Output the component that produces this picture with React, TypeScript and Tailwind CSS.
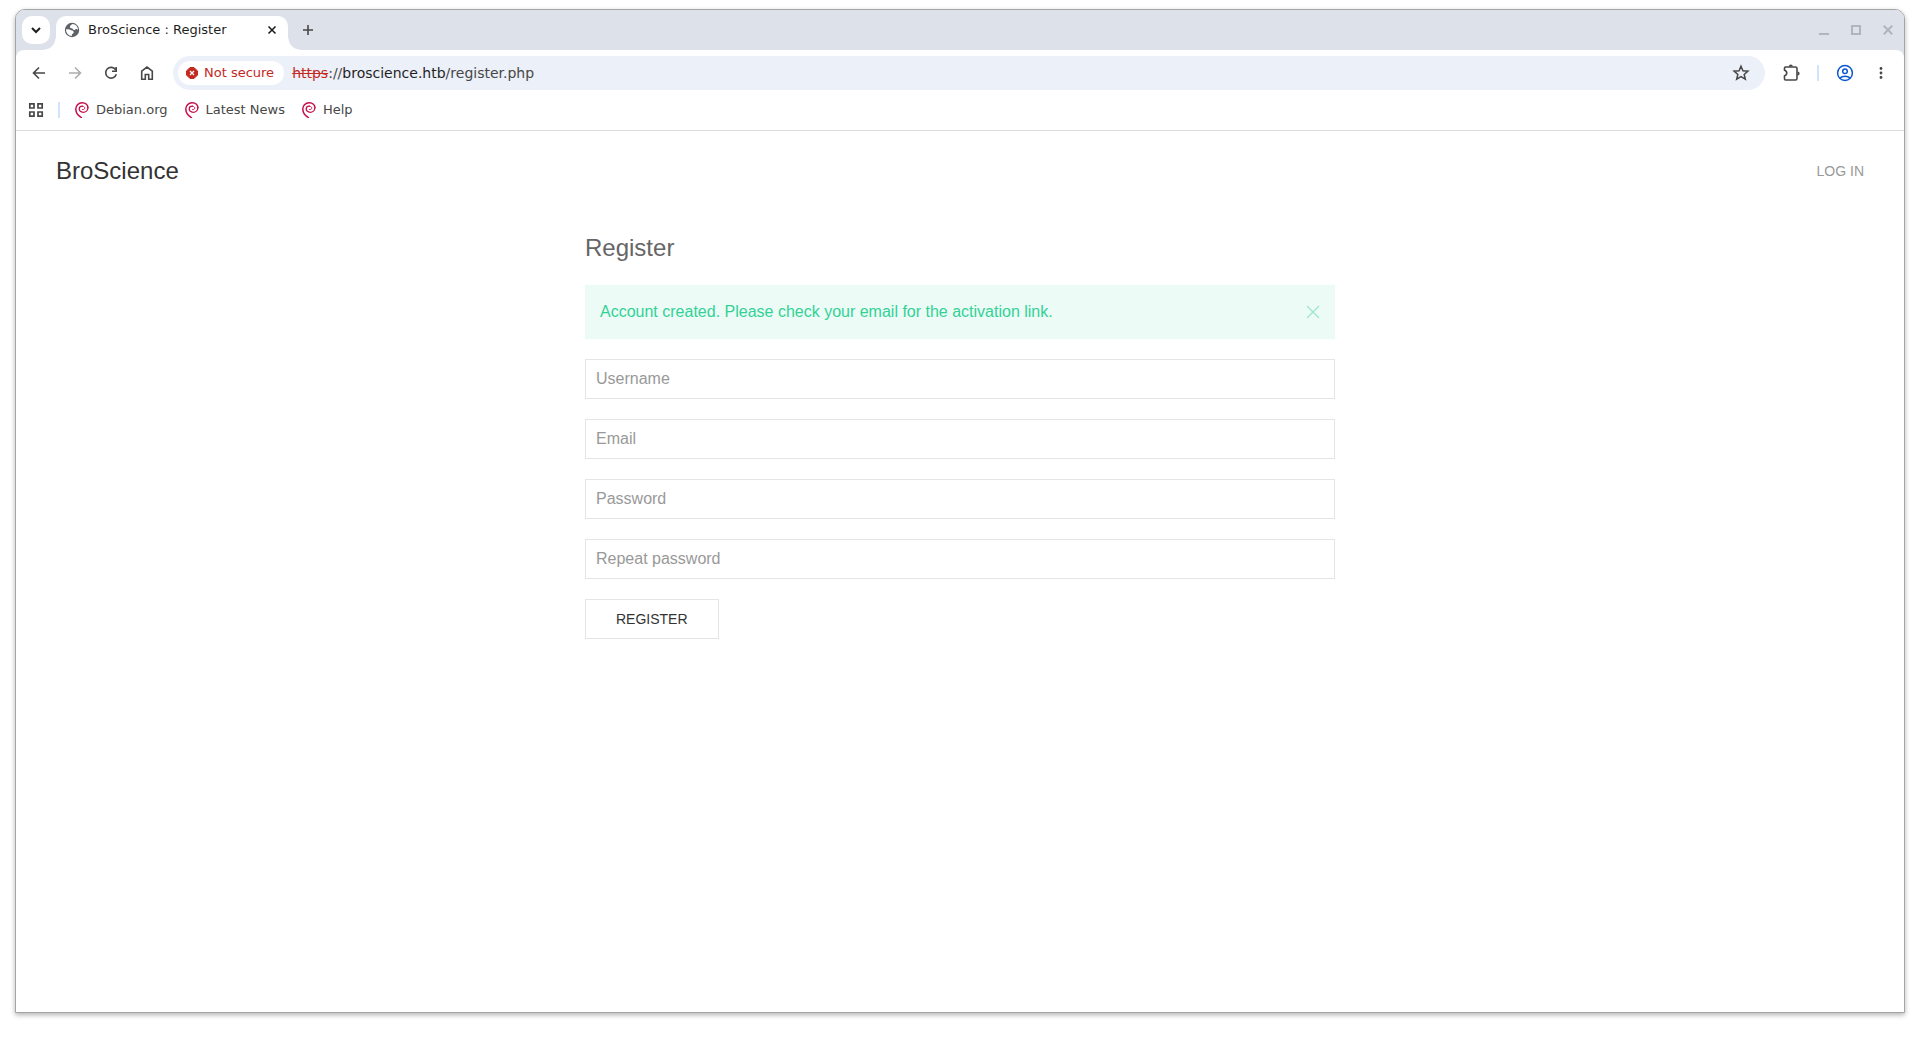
import React from "react";

type IconProps = { className?: string; children: React.ReactNode; box?: string };

function Icon({ className = "size-5", children, box = "0 0 24 24" }: IconProps) {
  return (
    <svg viewBox={box} className={className} fill="none" stroke="currentColor" aria-hidden="true">
      {children}
    </svg>
  );
}

function ToolButton({ label, children, className = "text-[#474747]" }: { label: string; children: React.ReactNode; className?: string }) {
  return (
    <button type="button" aria-label={label} className={`flex size-9 items-center justify-center ${className}`}>
      {children}
    </button>
  );
}

function Swirl() {
  return (
    <svg viewBox="0 0 16 16" className="size-4" fill="none" stroke="#c70f49" strokeLinecap="round" aria-hidden="true">
      <path d="M7.4 15.6C4.600 14 2 11 1.800 7.400C1.600 3.600 4.400 .8 8.200 .8C11.800 .8 14 2.900 13.900 5.700" strokeWidth="1.500" />
      <path d="M13.900 5.700C13.800 8.600 11.600 10.300 9.200 10.300C6.800 10.300 5.100 8.900 5.200 7C5.300 5.200 6.700 4.100 8.500 4.200" strokeWidth="1.300" />
      <path d="M8.500 4.200C10.200 4.300 10.900 5.400 10.700 6.400C10.400 7.500 9.300 7.900 8.400 7.500" strokeWidth=".9" />
    </svg>
  );
}

function TabStrip() {
  return (
    <div className="flex h-10 items-end rounded-t-[9px] bg-[#dde2ea] pl-1.5">
      <button type="button" aria-label="Search tabs" className="mb-1.5 flex size-7 items-center justify-center rounded-[10px] bg-white text-[#1f1f1f]">
        <Icon className="size-4" box="0 0 16 16">
          <path d="M4 6l4 4 4-4" strokeWidth="2" />
        </Icon>
      </button>
      <div className="-ml-1.5 size-3 bg-[radial-gradient(circle_at_top_left,transparent_11px,white_12px)]" />
      <div className="flex h-[34px] w-[232px] items-center rounded-t-[10px] bg-white pr-2 pb-1.5 pl-2">
        <svg viewBox="0 0 16 16" className="size-4 shrink-0" aria-hidden="true">
          <circle cx="8" cy="8" r="7.2" fill="#5f6368" />
          <path d="M8.400 2C7.400 2.800 6.100 3.400 6 4.700C5.900 5.900 6.700 6.200 7.700 6.200C8.800 6.200 8.700 7.700 9.800 7.900C11 8.100 11.200 7.100 12.200 6.900C13 6.800 13.500 7.300 14 8C14 4.800 11.600 2.100 8.400 2Z" fill="white" />
          <path d="M2 7.500C2 10.900 4.600 13.800 7.900 14L7.900 12.500C8 11.600 9.600 11.800 9.700 10.400C9.800 8.800 8.300 8.500 7.200 8.200C6.200 7.900 5.800 7.300 4.800 7.200C3.800 7.100 3 7.300 2 7.500Z" fill="white" />
        </svg>
        <span className="ml-2 grow truncate font-['DejaVu_Sans',sans-serif] text-[13px] leading-4 text-[#1f1f1f]">BroScience : Register</span>
        <button type="button" aria-label="Close tab" className="flex size-4 items-center justify-center text-[#1f1f1f]">
          <Icon className="size-4" box="0 0 16 16"><path d="M4.5 4.5l7 7m0-7l-7 7" strokeWidth="1.6" /></Icon>
        </button>
      </div>
      <div className="size-3 bg-[radial-gradient(circle_at_top_right,transparent_11px,white_12px)]" />
      <button type="button" aria-label="New tab" className="-ml-1.5 mb-1.5 flex size-7 items-center justify-center text-[#474747]">
        <Icon className="size-4" box="0 0 16 16"><path d="M8 3v10M3 8h10" strokeWidth="1.6" /></Icon>
      </button>
      <div className="mb-3 ml-auto flex gap-4 pr-2 text-[#b0b4bb]">
        <button type="button" aria-label="Minimize"><Icon className="size-4" box="0 0 16 16"><path d="M3 12h10" strokeWidth="2" /></Icon></button>
        <button type="button" aria-label="Maximize"><Icon className="size-4" box="0 0 16 16"><path d="M4 4h8v8H4z" strokeWidth="2" /></Icon></button>
        <button type="button" aria-label="Close"><Icon className="size-4" box="0 0 16 16"><path d="M3.800 3.800l8.400 8.400m0-8.400l-8.400 8.400" strokeWidth="2" /></Icon></button>
      </div>
    </div>
  );
}

function Toolbar() {
  return (
    <div className="flex h-[46px] items-center rounded-t-lg bg-white px-[5px]">
      <ToolButton label="Back"><Icon className="size-4" box="0 0 16 16"><path d="M14 8H3M8 2.500L2.500 8 8 13.500" strokeWidth="1.600" /></Icon></ToolButton>
      <ToolButton label="Forward" className="text-[#adadad]"><Icon className="size-4" box="0 0 16 16"><path d="M2 8h11M8 2.500L13.500 8 8 13.500" strokeWidth="1.600" /></Icon></ToolButton>
      <ToolButton label="Reload"><Icon className="size-4" box="0 0 16 16"><path d="M12.600 4.700A5.400 5.400 0 1 0 13.300 9.300M13.200 2v4.200H9" strokeWidth="1.600" /></Icon></ToolButton>
      <ToolButton label="Home"><Icon className="size-4" box="0 0 16 16"><path d="M2.700 14.200V6.200L8 2l5.300 4.200v8H9.700V9.500H6.300v4.700z" strokeWidth="1.600" /></Icon></ToolButton>
      <div className="ml-2 flex h-[34px] grow items-center rounded-full bg-[#ecf0f9] pr-3.5 pl-[5px] font-['DejaVu_Sans',sans-serif]">
        <button type="button" className="flex h-6 items-center gap-1.5 rounded-full bg-white pr-2.5 pl-2 text-[13px] text-[#c5281e]">
          <svg viewBox="0 0 12 12" className="size-3" aria-hidden="true">
            <path d="M4 .5h4L11.500 4v4L8 11.500H4L.5 8V4z" fill="#c5281e" stroke="#c5281e" strokeLinejoin="round" />
            <path d="M4 4l4 4m0-4L4 8" stroke="white" strokeWidth="1.300" />
          </svg>
          Not secure
        </button>
        <div role="textbox" aria-label="Address" tabIndex={0} className="ml-2 grow text-sm text-[#474747]">
          <span className="text-[#c5281e] line-through">https</span>://<span className="text-[#1f1f1f]">broscience.htb</span>/register.php
        </div>
        <button type="button" aria-label="Bookmark this tab" className="text-[#474747]">
          <Icon className="size-5"><path d="M12 3.800l2.300 5.500 6 .5-4.500 3.900 1.400 5.800L12 16.400l-5.200 3.100 1.400-5.800-4.500-3.900 6-.5z" strokeWidth="1.800" /></Icon>
        </button>
      </div>
      <div className="ml-2 flex items-center">
        <ToolButton label="Extensions">
          <svg viewBox="0 0 20 20" className="size-5" fill="none" aria-hidden="true">
            <path d="M4.500 4h10q1.500 0 1.500 1.500v10q0 1.500-1.500 1.500h-10q-1 0-1-1v-3.200c3-.8 3-4.800 0-5.600V5q0-1 1-1z" stroke="#474747" strokeWidth="1.600" />
            <path d="M7.800 3.600a2 2 0 0 1 4 0zM16.600 8.500a2 2 0 0 1 0 4z" fill="#474747" />
          </svg>
        </ToolButton>
        <div className="mx-2 h-4 w-0.5 bg-[#d3e3fd]" />
        <ToolButton label="Profile" className="text-[#0b57d0]">
          <svg viewBox="0 0 18 18" className="size-[18px]" fill="none" stroke="currentColor" strokeWidth="1.500" aria-hidden="true">
            <circle cx="9" cy="9" r="7.400" /><circle cx="9" cy="7.300" r="2.300" /><path d="M3.800 14c2.700-2.400 7.700-2.400 10.400 0" />
          </svg>
        </ToolButton>
        <ToolButton label="Menu">
          <svg viewBox="0 0 16 16" className="size-4" fill="currentColor" aria-hidden="true"><circle cx="8" cy="3.500" r="1.400" /><circle cx="8" cy="8" r="1.400" /><circle cx="8" cy="12.500" r="1.400" /></svg>
        </ToolButton>
      </div>
    </div>
  );
}

function Bookmarks() {
  return (
    <nav aria-label="Bookmarks" className="flex h-[35px] items-center border-b border-[#dcdfe0] pb-1.5 pl-3 font-['DejaVu_Sans',sans-serif] text-[13px] text-[#474747]">
      <button type="button" aria-label="Apps">
        <Icon className="size-4" box="0 0 16 16"><path d="M1.800 1.800h4.200v4.200h-4.200zM10 1.800h4.200v4.200h-4.200zM1.800 10h4.200v4.200h-4.200zM10 10h4.200v4.200h-4.200z" strokeWidth="1.700" /></Icon>
      </button>
      <div className="mx-3.5 h-4 w-0.5 bg-[#d3e3fd]" />
      <div className="flex gap-4">
        {["Debian.org", "Latest News", "Help"].map((name) => (
          <a key={name} href="#" className="flex items-center gap-1.5"><Swirl />{name}</a>
        ))}
      </div>
    </nav>
  );
}

const fields = [
  { label: "Username", type: "text" },
  { label: "Email", type: "email" },
  { label: "Password", type: "password" },
  { label: "Repeat password", type: "password" },
];

function RegisterPage() {
  return (
    <div className="grow font-['Liberation_Sans',sans-serif] text-base text-[#666]">
      <header className="flex h-20 items-center justify-between px-10">
        <a href="#" className="text-2xl text-[#333]">BroScience</a>
        <a href="#" className="text-sm text-[#999] uppercase">Log in</a>
      </header>
      <main className="mx-auto max-w-[750px] pt-5">
        <h1 className="text-2xl leading-[34px]">Register</h1>
        <div role="alert" className="mt-5 flex h-[54px] items-center justify-between bg-[#edfbf6] px-[15px] text-[#32d296]">
          <p>Account created. Please check your email for the activation link.</p>
          <button type="button" aria-label="Dismiss" className="opacity-45">
            <Icon className="size-3.5" box="0 0 14 14"><path d="M1 1l12 12M13 1L1 13" strokeWidth="1.100" /></Icon>
          </button>
        </div>
        <form className="mt-5 flex flex-col items-start gap-5" onSubmit={(e) => e.preventDefault()}>
          {fields.map((f) => (
            <input key={f.label} type={f.type} aria-label={f.label} placeholder={f.label} className="h-10 w-full border border-[#e5e5e5] bg-white px-2.5 placeholder:text-[#999]" />
          ))}
          <button type="submit" className="h-10 border border-[#e5e5e5] px-[30px] text-sm text-[#333] uppercase">Register</button>
        </form>
      </main>
    </div>
  );
}

export default function App() {
  return (
    <div className="flex min-h-screen flex-col bg-white px-[15px] pt-[9px] pb-[31px]">
      <div className="flex grow flex-col rounded-t-[10px] border border-[#a5a5a5] bg-white shadow-[0_2px_5px_rgba(0,0,0,0.3)]">
        <div className="rounded-t-[9px] bg-[#dde2ea]">
          <TabStrip />
          <Toolbar />
        </div>
        <Bookmarks />
        <RegisterPage />
      </div>
    </div>
  );
}
